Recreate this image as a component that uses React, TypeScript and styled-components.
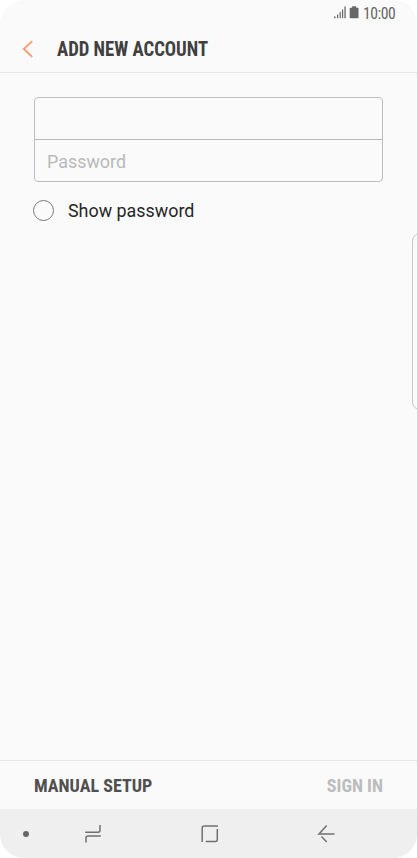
import React from "react";
import styled, { createGlobalStyle } from "styled-components";

const GlobalStyle = createGlobalStyle`
  * { box-sizing: border-box; }
  html, body { margin: 0; padding: 0; background: #fff; overflow: hidden; }
  input, button { font: inherit; color: inherit; border: 0; background: none; padding: 0; margin: 0; }
`;

const Phone = styled.div`
  position: relative;
  display: flex;
  flex-direction: column;
  width: 417px;
  height: 858px;
  overflow: hidden;
  border-radius: 24px;
  background: #fafafa;
  font-family: Roboto, sans-serif;
  font-size: 17.9px;
`;

const StatusBar = styled.div`
  display: flex;
  justify-content: flex-end;
  align-items: center;
  height: 26px;
  padding-right: 21px;
  color: #666;
`;

const StatusIcons = styled.svg`
  width: 26px;
  height: 14px;
  margin-right: 3px;
`;

const Clock = styled.span`
  width: 33px;
  padding-top: 1px;
  font-family: "Roboto Condensed", Roboto, sans-serif;
  font-stretch: 75%;
  font-size: 15.7px;
  letter-spacing: -0.45px;
  line-height: 26px;
  white-space: nowrap;
`;

const Header = styled.header`
  display: flex;
  align-items: center;
  height: 47px;
  padding: 0 0 0 22px;
  border-bottom: 1px solid #e6e6e6;
`;

const BackIcon = styled.svg`
  width: 12px;
  height: 18px;
  margin-right: 23px;
`;

const Label = styled.span<{ $color: string; $size: number }>`
  font-family: "Roboto Condensed", Roboto, sans-serif;
  font-stretch: 75%;
  font-weight: 700;
  font-size: ${(p) => p.$size}px;
  line-height: 24px;
  white-space: nowrap;
  transform: scaleY(1.06);
  color: ${(p) => p.$color};
`;

const Title = styled(Label)`
  padding-top: 1px;
`;

const Content = styled.main`
  flex: 1;
  padding: 24px 34px 0;
`;

const Fields = styled.div`
  height: 85px;
  border: 1px solid #bebebe;
  border-radius: 4px;
`;

const Field = styled.input`
  display: block;
  width: 100%;
  height: 41px;
  padding: 1px 12px 0;
  outline: none;
  & + & { height: 42px; border-top: 1px solid #b8b8b8; }
  &::placeholder { color: #b9b9b9; opacity: 1; }
`;

const CheckRow = styled.label`
  display: flex;
  align-items: center;
  height: 24px;
  margin: 16px 0 0 -1px;
  color: #262626;
`;

const Circle = styled.span`
  width: 21px;
  height: 21px;
  margin-right: 14px;
  border: 1.2px solid #777;
  border-radius: 50%;
`;

const EdgeHandle = styled.div`
  position: absolute;
  left: 412px;
  top: 233px;
  width: 16px;
  height: 177px;
  border: 1px solid #c8c8c8;
  border-radius: 8px;
`;

const Actions = styled.div`
  display: flex;
  justify-content: space-between;
  align-items: center;
  height: 49px;
  padding: 2px 34px 0;
  border-top: 1px solid #e6e6e6;
`;

const NavBar = styled.nav`
  display: flex;
  align-items: center;
  height: 49px;
  padding-left: 23px;
  background: #efefef;
`;

const Dot = styled.span`
  width: 6px;
  height: 6px;
  border-radius: 50%;
  background: #666;
`;

const NavIcon = styled.svg<{ $gap: number }>`
  width: 18px;
  height: 20px;
  margin-left: ${(p) => p.$gap}px;
  fill: none;
  stroke: #707070;
  stroke-width: 1.5;
`;

export default function App() {
  return (
    <Phone>
      <GlobalStyle />
      <StatusBar>
        <StatusIcons viewBox="0 0 26 14" fill="#666">
          <path d="M0 12.2v-1.6h1.5v1.6zM3 12.2V8.6h1.2v3.6zM5.6 12.2V6h1.2v6.2zM8 12.2V3.4h1.2v8.8zM10.4 12.2V.6h1.3v11.6z" />
          <path d="M16.4 1.7h1.8V.3h4v1.4h1.6q.7 0 .7.7v9.2q0 .7-.7.7h-7.4q-.7 0-.7-.7V2.4q0-.7.7-.7z" />
        </StatusIcons>
        <Clock>10:00</Clock>
      </StatusBar>
      <Header>
        <BackIcon viewBox="0 0 12 18" fill="none" stroke="#ff9870" strokeWidth="1.8">
          <path d="M10.2 1.2 1.8 9l8.4 7.8" />
        </BackIcon>
        <Title $color="#404040" $size={18.7}>ADD NEW ACCOUNT</Title>
      </Header>
      <Content>
        <Fields>
          <Field type="text" aria-label="Email" />
          <Field type="password" placeholder="Password" />
        </Fields>
        <CheckRow>
          <Circle />
          Show password
        </CheckRow>
      </Content>
      <Actions>
        <Label $color="#505050" $size={18}>MANUAL SETUP</Label>
        <Label $color="#bcbcbc" $size={18}>SIGN IN</Label>
      </Actions>
      <NavBar>
        <Dot />
        <NavIcon $gap={55} viewBox="0 0 18 20">
          <path d="M1.2 8.2H14q2 0 2-2V1M16.8 12H4q-2 0-2 2v4.5" />
        </NavIcon>
        <NavIcon $gap={99} viewBox="0 0 18 20">
          <path d="M17 2H3.2q-2 0-2 2v14M16.3 5v10.6q0 2-2 2H4.8" />
        </NavIcon>
        <NavIcon $gap={98} viewBox="0 0 18 20">
          <path d="M17.5 10H2L9.7 1.5M4.5 12.5l5.2 5.5" />
        </NavIcon>
      </NavBar>
      <EdgeHandle />
    </Phone>
  );
}
